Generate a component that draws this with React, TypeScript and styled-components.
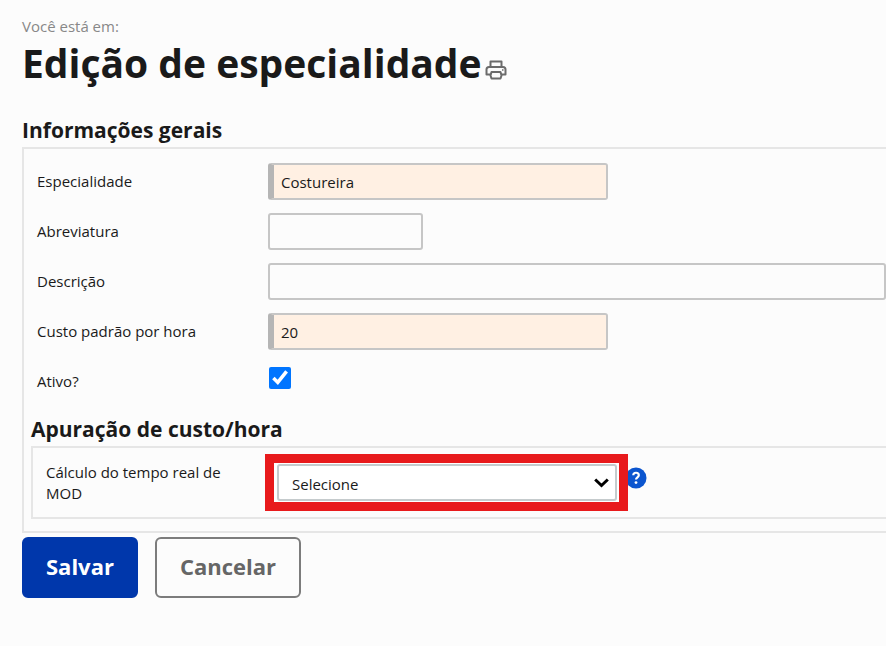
import React from "react";
import styled, { createGlobalStyle, css } from "styled-components";

const GlobalStyle = createGlobalStyle`
  *, *::before, *::after { box-sizing: border-box; }
  body {
    margin: 0;
    background: #fcfcfc;
    color: #1a1a1a;
    font-family: "Open Sans", "Noto Sans", sans-serif;
    font-size: 15px;
    line-height: 21px;
    overflow-x: hidden;
  }
`;

const Page = styled.main`
  padding: 16px 0 48px 22px;
`;

const Breadcrumb = styled.nav`
  color: #888;
`;

const TitleRow = styled.header`
  display: flex;
  align-items: center;
  gap: 3px;
`;

const Title = styled.h1`
  margin: 0;
  font-size: 39px;
  line-height: 52px;
  font-weight: 700;
`;

const PrintButton = styled.button`
  display: flex;
  padding: 14px 0 0;
  border: 0;
  background: none;
  color: #6b6b6b;
`;

const FormArea = styled.form`
  margin-top: 26px;
`;

const SectionTitle = styled.h2`
  margin: 0;
  padding-bottom: 2px;
  font-size: 21px;
  line-height: 30px;
  font-weight: 700;
`;

const Panel = styled.section`
  border: 2px solid #e6e6e6;
  border-right: 0;
  padding: 14px 0 12px 13px;
`;

const SubSection = styled.div`
  margin: 15px 0 0 -6px;
`;

const SubPanel = styled(Panel)`
  padding: 6px 0 6px 13px;
`;

const Fields = styled.div`
  display: grid;
  gap: 13px;
`;

const Row = styled.div`
  display: grid;
  grid-template-columns: 231px minmax(0, 1fr);
  align-items: center;
  min-height: 37px;
`;

const CheckRow = styled(Row)`
  min-height: 36px;
`;

const SubRow = styled(Row)`
  grid-template-columns: 219px minmax(0, 1fr);
`;

const Label = styled.label`
  padding-right: 24px;
`;

const control = css`
  height: 37px;
  border: 2px solid #c6c6c6;
  border-radius: 3px;
  color: #1a1a1a;
  font: inherit;
`;

const widths = { small: "155px", medium: "340px", full: "100%" };

const TextInput = styled.input<{ $size: keyof typeof widths; $required?: boolean }>`
  ${control}
  width: ${({ $size }) => widths[$size]};
  padding: 0 10px;
  background: #fcfcfc;
  ${({ $required }) =>
    $required &&
    css`
      padding-left: 7px;
      border-left: 6px solid #b5b5b5;
      background: #fff0e3;
    `}
`;

const Checkbox = styled.input`
  width: 22px;
  height: 22px;
  margin: 0 1px 6px;
  accent-color: #0075ff;
`;

const SelectGroup = styled.div`
  display: flex;
  align-items: center;
`;

const Highlight = styled.div`
  position: relative;
  z-index: 1;
  display: grid;
  padding: 1px 2px 1px 3px;
  border: 9px solid #e81a1c;
  background: #fff;
`;

const SelectBox = styled.div`
  display: grid;
  align-items: center;

  > * {
    grid-area: 1 / 1;
  }

  > svg {
    justify-self: end;
    margin-right: 8px;
    pointer-events: none;
  }
`;

const Select = styled.select`
  ${control}
  appearance: none;
  width: 340px;
  padding: 4px 32px 0 13px;
  border-color: #c5cbcd;
  background: #fff;
`;

const HelpButton = styled.button`
  display: flex;
  margin: 0 0 10px -3px;
  padding: 0;
  border: 0;
  background: none;
`;

const Actions = styled.div`
  display: flex;
  gap: 17px;
  padding-top: 4px;
`;

const Button = styled.button<{ $primary?: boolean }>`
  height: 61px;
  padding: 0 ${({ $primary }) => ($primary ? 22 : 23)}px 2px;
  border: 2px solid ${({ $primary }) => ($primary ? "#0037ab" : "#7c7c7c")};
  border-radius: 6px;
  background: ${({ $primary }) => ($primary ? "#0037ab" : "#fcfcfc")};
  color: ${({ $primary }) => ($primary ? "#fff" : "#666")};
  font: inherit;
  font-size: 22px;
  font-weight: 700;
`;

const PrinterIcon = () => (
  <svg width="22" height="20" viewBox="0 0 22 20" fill="none" stroke="currentColor" strokeWidth="2" strokeLinejoin="round" aria-hidden="true">
    <path d="M5.5 7V1.5h11V7" />
    <path d="M5.5 14.5H1.5V9.5Q1.5 7 4 7H18Q20.5 7 20.5 9.5V14.5H16.5" />
    <path d="M6.5 12H15.5L16.5 15.5L15.5 18.5H6.5L5.5 15.5Z" />
    <path d="M17 10h1.5" strokeWidth="1.5" />
  </svg>
);

const ChevronIcon = () => (
  <svg width="15" height="10" viewBox="0 0 15 10" fill="none" stroke="#000" strokeWidth="3" aria-hidden="true">
    <path d="M1.2 1.5L7.5 7.5L13.8 1.5" />
  </svg>
);

const HelpIcon = () => (
  <svg width="22" height="22" viewBox="0 0 22 22" aria-hidden="true">
    <circle cx="11" cy="11" r="10.5" fill="#0b55cf" />
    <path d="M8.3 8.2C8.3 4.9 13.8 4.9 13.8 8.2C13.8 10.3 11 10.3 11 12.6" fill="none" stroke="#fff" strokeWidth="2.2" />
    <circle cx="11" cy="15.6" r="1.4" fill="#fff" />
  </svg>
);

type Field = {
  id: string;
  label: string;
  size: keyof typeof widths;
  value?: string;
  required?: boolean;
};

const fields: Field[] = [
  { id: "especialidade", label: "Especialidade", size: "medium", value: "Costureira", required: true },
  { id: "abreviatura", label: "Abreviatura", size: "small" },
  { id: "descricao", label: "Descrição", size: "full" },
  { id: "custo", label: "Custo padrão por hora", size: "medium", value: "20", required: true },
];

export default function App() {
  return (
    <>
      <GlobalStyle />
      <Page>
        <Breadcrumb>Você está em:</Breadcrumb>
        <TitleRow>
          <Title>Edição de especialidade</Title>
          <PrintButton type="button" aria-label="Imprimir">
            <PrinterIcon />
          </PrintButton>
        </TitleRow>
        <FormArea onSubmit={(event) => event.preventDefault()}>
          <SectionTitle>Informações gerais</SectionTitle>
          <Panel>
            <Fields>
              {fields.map(({ id, label, size, value, required }) => (
                <Row key={id}>
                  <Label htmlFor={id}>{label}</Label>
                  <TextInput id={id} $size={size} $required={required} defaultValue={value} />
                </Row>
              ))}
              <CheckRow>
                <Label htmlFor="ativo">Ativo?</Label>
                <Checkbox id="ativo" type="checkbox" defaultChecked />
              </CheckRow>
            </Fields>
            <SubSection>
              <SectionTitle>Apuração de custo/hora</SectionTitle>
              <SubPanel>
                <SubRow>
                  <Label htmlFor="calculo">Cálculo do tempo real de MOD</Label>
                  <SelectGroup>
                    <Highlight>
                      <SelectBox>
                        <Select id="calculo">
                          <option>Selecione</option>
                        </Select>
                        <ChevronIcon />
                      </SelectBox>
                    </Highlight>
                    <HelpButton type="button" aria-label="Ajuda">
                      <HelpIcon />
                    </HelpButton>
                  </SelectGroup>
                </SubRow>
              </SubPanel>
            </SubSection>
          </Panel>
          <Actions>
            <Button type="submit" $primary>Salvar</Button>
            <Button type="button">Cancelar</Button>
          </Actions>
        </FormArea>
      </Page>
    </>
  );
}
